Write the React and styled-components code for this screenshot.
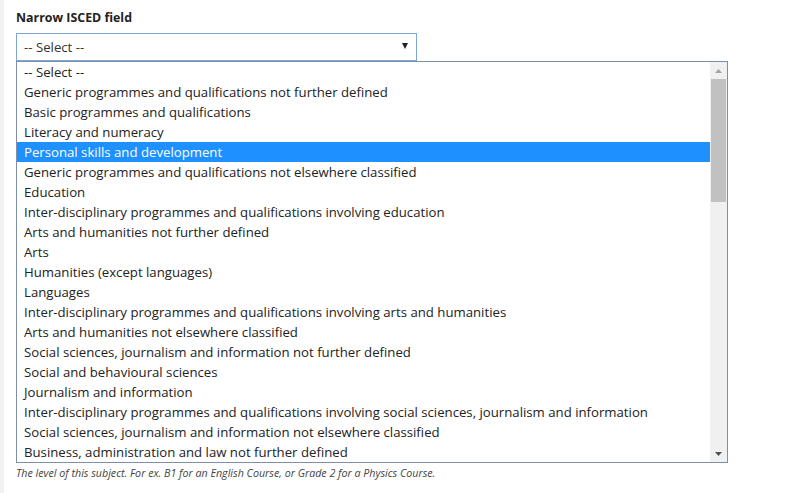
import styled, { createGlobalStyle } from 'styled-components';

const OPTIONS = [
  '-- Select --',
  'Generic programmes and qualifications not further defined',
  'Basic programmes and qualifications',
  'Literacy and numeracy',
  'Personal skills and development',
  'Generic programmes and qualifications not elsewhere classified',
  'Education',
  'Inter-disciplinary programmes and qualifications involving education',
  'Arts and humanities not further defined',
  'Arts',
  'Humanities (except languages)',
  'Languages',
  'Inter-disciplinary programmes and qualifications involving arts and humanities',
  'Arts and humanities not elsewhere classified',
  'Social sciences, journalism and information not further defined',
  'Social and behavioural sciences',
  'Journalism and information',
  'Inter-disciplinary programmes and qualifications involving social sciences, journalism and information',
  'Social sciences, journalism and information not elsewhere classified',
  'Business, administration and law not further defined',
];

const SELECTED = 4;

export default function App() {
  return (
    <>
      <GlobalStyle />
      <Page>
        <Field>
          <Label>Narrow ISCED field</Label>
          <SelectBox>
            <span>-- Select --</span>
            <Caret />
          </SelectBox>
          <ListBox>
            <Options>
              {OPTIONS.map((o, i) => (
                <Option key={o} selected={i === SELECTED}>
                  {o}
                </Option>
              ))}
            </Options>
            <Scrollbar>
              <ScrollArrow>
                <svg width="7" height="4" viewBox="0 0 7 4">
                  <path d="M0 4 L3.5 0 L7 4 Z" fill="#a3a3a3" />
                </svg>
              </ScrollArrow>
              <Track>
                <Thumb />
              </Track>
              <ScrollArrow>
                <svg width="7" height="4" viewBox="0 0 7 4">
                  <path d="M0 0 L3.5 4 L7 0 Z" fill="#505050" />
                </svg>
              </ScrollArrow>
            </Scrollbar>
          </ListBox>
          <Help>
            The level of this subject. For ex. B1 for an English Course, or
            Grade 2 for a Physics Course.
          </Help>
        </Field>
      </Page>
    </>
  );
}

const GlobalStyle = createGlobalStyle`
  html, body {
    margin: 0;
    background: #fff;
  }
  body {
    font-family: "Open Sans", "Noto Sans", sans-serif;
    color: #222;
  }
`;

const Page = styled.div`
  width: 796px;
  height: 493px;
  box-sizing: border-box;
  border-left: 4px solid #f1f1f1;
  padding: 9px 0 0 12px;
  overflow: hidden;
`;

const Field = styled.div`
  display: flex;
  flex-direction: column;
  align-items: flex-start;
`;

const Label = styled.div`
  font-size: 12.4px;
  font-weight: 700;
  line-height: 18px;
  color: #222;
  margin-bottom: 6px;
`;

const SelectBox = styled.div`
  width: 401px;
  height: 28px;
  box-sizing: border-box;
  border: 1px solid #7ea6d6;
  display: flex;
  align-items: center;
  justify-content: space-between;
  padding: 0 8px 0 7px;
  font-size: 13.2px;
  color: #333;
`;

const Caret = styled.span`
  width: 0;
  height: 0;
  border-left: 3.5px solid transparent;
  border-right: 3.5px solid transparent;
  border-top: 6px solid #222;
  margin-top: -2px;
`;

const ListBox = styled.div`
  width: 712px;
  height: 402px;
  box-sizing: border-box;
  border: 1px solid #7f8fa9;
  display: flex;
  background: #fff;
`;

const Options = styled.div`
  flex: 1;
  display: flex;
  flex-direction: column;
  overflow: hidden;
`;

const Option = styled.div`
  flex: none;
  height: 20px;
  line-height: 20px;
  padding-left: 7px;
  font-size: 13.2px;
  white-space: nowrap;
  color: ${(p) => (p.selected ? '#fff' : '#222')};
  background: ${(p) => (p.selected ? '#1e90ff' : 'transparent')};
`;

const Scrollbar = styled.div`
  width: 17px;
  background: #f0f0f0;
  display: flex;
  flex-direction: column;
`;

const ScrollArrow = styled.div`
  height: 17px;
  display: flex;
  align-items: center;
  justify-content: center;
`;

const Track = styled.div`
  flex: 1;
  padding: 0 1px;
`;

const Thumb = styled.div`
  height: 123px;
  background: #c1c1c1;
`;

const Help = styled.div`
  margin-top: 3px;
  font-size: 10.7px;
  font-style: italic;
  color: #444;
  line-height: 14px;
`;
